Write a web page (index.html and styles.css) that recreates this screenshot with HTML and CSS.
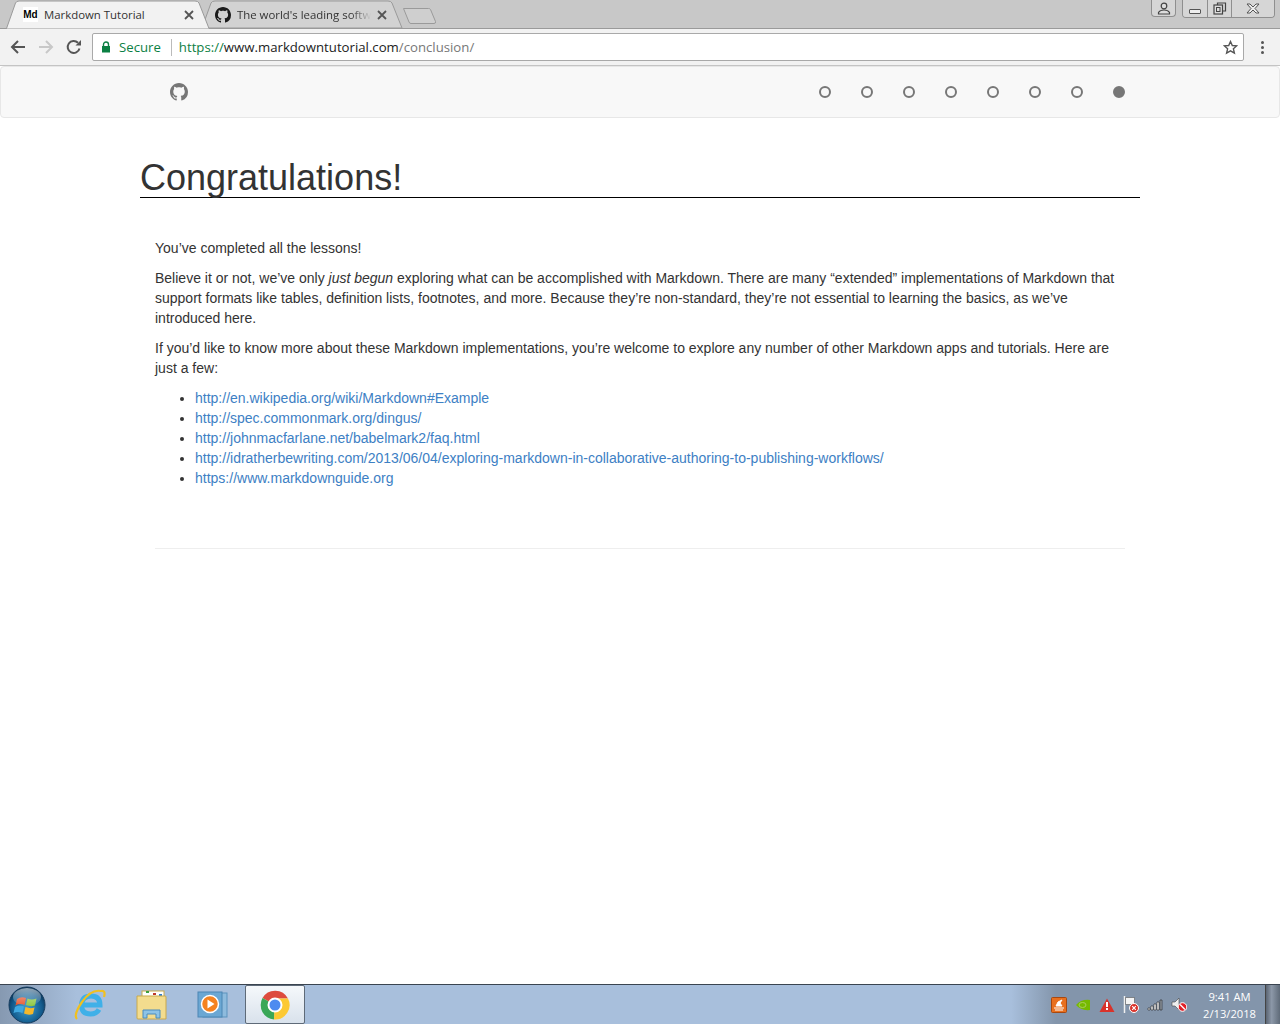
FILE: index.html
```html
<!DOCTYPE html>
<html lang="en">
<head>
<meta charset="utf-8">
<title>Markdown Tutorial</title>
<link rel="stylesheet" href="styles.css">
</head>
<body>
<div class="screen">
  <header class="browser">
    <div class="tabstrip">
      <div class="tabs">
        <div class="tab tab-active">
          <svg class="tab-shape" width="212" height="29" viewBox="0 0 212 29"><path d="M0 28.500h6.500L15.500 3Q16.500 1 19 1h176q3 0 4 2l10 25.500" fill="#f2f2f2" stroke="#9a9a9a"/></svg>
          <span class="favicon-md">Md</span>
          <span class="tab-title">Markdown Tutorial</span>
          <svg class="tab-close" width="10" height="10" viewBox="0 0 10 10"><path d="M1 1l8 8M9 1l-8 8" stroke="#555" stroke-width="1.800"/></svg>
        </div>
        <div class="tab tab-back">
          <svg class="tab-shape" width="200" height="29" viewBox="0 0 200 29"><path d="M-3 28L6 3Q7 1 10 1h173q3 0 4 2l10 25z" fill="#d2d2d2" stroke="#9a9a9a"/></svg>
          <svg class="fav-gh" width="16" height="16" viewBox="0 0 16 16"><path fill="#1b1b1b" d="M8 0C3.580 0 0 3.580 0 8c0 3.540 2.290 6.530 5.470 7.590.4.070.55-.17.55-.38 0-.19-.01-.82-.01-1.490-2.010.37-2.530-.49-2.690-.94-.09-.23-.48-.94-.82-1.130-.28-.15-.68-.52-.01-.53.630-.01 1.080.58 1.230.82.720 1.210 1.870.87 2.330.66.070-.52.280-.87.510-1.070-1.780-.2-3.640-.89-3.640-3.950 0-.87.310-1.590.820-2.150-.08-.2-.36-1.020.08-2.120 0 0 .67-.21 2.200.82.640-.18 1.320-.27 2-.27s1.360.09 2 .27c1.530-1.040 2.200-.82 2.200-.82.440 1.100.16 1.920.08 2.120.51.560.82 1.270.82 2.150 0 3.070-1.870 3.750-3.650 3.950.29.250.54.730.54 1.480 0 1.070-.01 1.930-.01 2.200 0 .21.150.46.550.38A8.010 8.010 0 0016 8c0-4.420-3.580-8-8-8z"/></svg>
          <span class="tab-title tab-title-fade">The world's leading software</span>
          <svg class="tab-close" width="10" height="10" viewBox="0 0 10 10"><path d="M1 1l8 8M9 1l-8 8" stroke="#555" stroke-width="1.800"/></svg>
        </div>
        <svg class="newtab" width="36" height="18" viewBox="0 0 36 18"><path d="M1.500 1.500h25q1.500 0 2 1l5 12q.5 2-1.500 2H9q-1.500 0-2-1.500z" fill="#cfcfcf" stroke="#9a9a9a"/></svg>
      </div>
      <div class="wincontrols">
        <div class="winbtn winbtn-user">
          <svg width="14" height="13" viewBox="0 0 14 13"><circle cx="7" cy="4" r="2.800" fill="#ddd" stroke="#444" stroke-width="1.200"/><path d="M1.500 12v-1.500Q3 8 7 8t5.500 2.500V12z" fill="#ddd" stroke="#444" stroke-width="1.200"/></svg>
        </div>
        <div class="wingroup">
          <div class="winbtn winbtn-min"><span class="min-glyph"></span></div>
          <div class="winbtn winbtn-max">
            <svg width="14" height="13" viewBox="0 0 14 13"><path d="M4.500 3V1h8v8h-3" fill="none" stroke="#444" stroke-width="1.200"/><rect x="1" y="3" width="8.500" height="9" fill="#ddd" stroke="#444" stroke-width="1.200"/><rect x="3.500" y="5.500" width="3.500" height="4" fill="none" stroke="#444"/></svg>
          </div>
          <div class="winbtn winbtn-close">
            <svg width="14" height="11" viewBox="0 0 14 11"><path d="M1 1h3l3 3 3-3h3L9 5.500l4 4.500h-3L7 7l-3 3H1l4-4.500z" fill="#eee" stroke="#555"/></svg>
          </div>
        </div>
      </div>
    </div>
    <div class="toolbar">
      <div class="navbtns">
        <svg width="16" height="14" viewBox="0 0 16 14"><path d="M15 7H2M8 1L2 7l6 6" fill="none" stroke="#555" stroke-width="2"/></svg>
        <svg width="16" height="14" viewBox="0 0 16 14"><path d="M1 7h13M8 1l6 6-6 6" fill="none" stroke="#c8c8c8" stroke-width="2"/></svg>
        <svg width="16" height="16" viewBox="0 0 16 16"><path d="M13.500 9.500A6 6 0 1 1 12 3.800" fill="none" stroke="#555" stroke-width="2"/><path d="M9.500 6.500H15V1z" fill="#555"/></svg>
      </div>
      <div class="omnibox">
        <svg class="lock" width="10" height="12" viewBox="0 0 10 12"><path d="M2.500 5V3.500a2.500 2.500 0 0 1 5 0V5" fill="none" stroke="#0b8043" stroke-width="1.400"/><rect x="1" y="5" width="8" height="6.500" fill="#0b8043"/></svg>
        <span class="secure">Secure</span>
        <span class="omni-sep"></span>
        <span class="url"><span class="url-scheme">https://</span><span class="url-host">www.markdowntutorial.com</span><span class="url-path">/conclusion/</span></span>
        <svg class="star" width="15" height="15" viewBox="0 0 15 15"><path d="M7.500 1.500l1.800 4 4.300.4-3.200 2.900 1 4.200-3.900-2.200-3.900 2.200 1-4.200L1.400 5.900l4.300-.4z" fill="none" stroke="#555" stroke-width="1.400"/></svg>
      </div>
      <div class="menu-dots"><i></i><i></i><i></i></div>
    </div>
  </header>

  <main class="page">
    <nav class="navbar">
      <a class="gh-link" href="#" aria-label="GitHub">
        <svg width="18" height="18" viewBox="0 0 16 16"><path fill="#777" d="M8 0C3.580 0 0 3.580 0 8c0 3.540 2.290 6.530 5.470 7.590.4.070.55-.17.55-.38 0-.19-.01-.82-.01-1.490-2.010.37-2.530-.49-2.690-.94-.09-.23-.48-.94-.82-1.130-.28-.15-.68-.52-.01-.53.630-.01 1.080.58 1.230.82.720 1.210 1.870.87 2.330.66.070-.52.280-.87.510-1.070-1.780-.2-3.640-.89-3.640-3.950 0-.87.310-1.590.820-2.150-.08-.2-.36-1.020.08-2.120 0 0 .67-.21 2.200.82.640-.18 1.320-.27 2-.27s1.360.09 2 .27c1.530-1.040 2.200-.82 2.200-.82.440 1.100.16 1.920.08 2.120.51.560.82 1.270.82 2.150 0 3.070-1.870 3.750-3.650 3.950.29.250.54.730.54 1.480 0 1.070-.01 1.930-.01 2.200 0 .21.150.46.550.38A8.010 8.010 0 0016 8c0-4.420-3.580-8-8-8z"/></svg>
      </a>
      <div class="dots">
        <span class="dot"></span><span class="dot"></span><span class="dot"></span><span class="dot"></span><span class="dot"></span><span class="dot"></span><span class="dot"></span><span class="dot dot-on"></span>
      </div>
    </nav>
    <div class="container">
      <h1 class="title">Congratulations!</h1>
      <div class="lesson">
        <p>You’ve completed all the lessons!</p>
        <p>Believe it or not, we’ve only <em>just begun</em> exploring what can be accomplished with Markdown. There are many “extended” implementations of Markdown that support formats like tables, definition lists, footnotes, and more. Because they’re non-standard, they’re not essential to learning the basics, as we’ve introduced here.</p>
        <p>If you’d like to know more about these Markdown implementations, you’re welcome to explore any number of other Markdown apps and tutorials. Here are just a few:</p>
        <ul class="links">
          <li><a href="#">http://en.wikipedia.org/wiki/Markdown#Example</a></li>
          <li><a href="#">http://spec.commonmark.org/dingus/</a></li>
          <li><a href="#">http://johnmacfarlane.net/babelmark2/faq.html</a></li>
          <li><a href="#">http://idratherbewriting.com/2013/06/04/exploring-markdown-in-collaborative-authoring-to-publishing-workflows/</a></li>
          <li><a href="#">https://www.markdownguide.org</a></li>
        </ul>
        <hr class="rule">
      </div>
    </div>
  </main>

  <footer class="taskbar">
    <div class="task-start">
      <svg width="38" height="38" viewBox="0 0 38 38">
        <defs>
          <radialGradient id="orb" cx="50%" cy="60%" r="60%"><stop offset="0" stop-color="#3f9fd0"/><stop offset=".7" stop-color="#125a8c"/><stop offset="1" stop-color="#0a2f50"/></radialGradient>
          <linearGradient id="gloss" x1="0" y1="0" x2="0" y2="1"><stop offset="0" stop-color="#fff" stop-opacity=".55"/><stop offset="1" stop-color="#fff" stop-opacity=".05"/></linearGradient>
        </defs>
        <circle cx="19" cy="19" r="18" fill="url(#orb)" stroke="#163c5e"/>
        <path d="M9 13q4-3 9-1l-1.500 7q-4.500-2-9 .5z" fill="#e8552c"/>
        <path d="M19.500 12.500q4 2 9 0l-1.500 7q-4.500 1.500-9-.5z" fill="#8cc63f"/>
        <path d="M7 21q4.500-2.500 9-.5L14.500 27q-4.500-2-9 0z" fill="#3fa8e0"/>
        <path d="M17.500 21q4.500 2 9 .5L25 28q-4.500 1.500-9-.5z" fill="#f6b82a"/>
        <ellipse cx="19" cy="11" rx="14" ry="9" fill="url(#gloss)"/>
      </svg>
    </div>
    <div class="task-item">
      <svg width="34" height="34" viewBox="0 0 34 34"><path d="M8.500 17h18.500q0-9-9-9t-9.500 9q0 9 9 9 6 0 8.500-4.500" fill="none" stroke="#3fb0e8" stroke-width="5"/><path d="M4 31Q0 27 9 14T28 3q5-1 3 6" fill="none" stroke="#f0c020" stroke-width="2.200"/></svg>
    </div>
    <div class="task-item">
      <svg width="34" height="30" viewBox="0 0 34 30"><rect x="7" y="1" width="22" height="10" fill="#fff" stroke="#c9a94c"/><rect x="11" y="1" width="3" height="2" fill="#3ca03c"/><rect x="18" y="3" width="3" height="2" fill="#c0392b"/><rect x="24" y="4" width="3" height="2" fill="#2d7fd0"/><path d="M2 6h28a1 1 0 0 1 1 1v22H3a1 1 0 0 1-1-1z" fill="#f3dc8e" stroke="#c9a94c"/><path d="M8 28v-8h17v8h-4v-4h-9v4z" fill="#8dc3e6" stroke="#4b8cbd"/></svg>
    </div>
    <div class="task-item">
      <svg width="34" height="30" viewBox="0 0 34 30"><rect x="6" y="3" width="24" height="24" fill="#8ebbdd" stroke="#5d93bd"/><rect x="1" y="2" width="24" height="25" fill="#6ba7d3" stroke="#4d86b3"/><circle cx="13" cy="14" r="8.500" fill="#f5821f" stroke="#fff" stroke-width="1.500"/><path d="M10.500 9.500l7 4.500-7 4.500z" fill="#fff"/></svg>
    </div>
    <div class="task-item task-item-on">
      <svg width="30" height="30" viewBox="0 0 30 30"><path d="M15 15L2.500 8A14.500 14.500 0 0 1 28 8.500H15z" fill="#dd4b3e"/><path d="M15 15L2.500 8A14.500 14.500 0 0 0 14 29.500z" fill="#3aa757"/><path d="M15 8.500h13A14.500 14.500 0 0 1 14 29.500z" fill="#fcc934"/><circle cx="15" cy="15" r="6.500" fill="#4d8bf0" stroke="#fff" stroke-width="2"/></svg>
    </div>
    <div class="tray">
      <div class="tray-icons">
        <svg width="16" height="16" viewBox="0 0 16 16"><rect x=".5" y=".5" width="15" height="15" rx="1" fill="#e8701f" stroke="#a8480f"/><path d="M3 11h10M4 13h8M5 9h6L9 6l2-3-4 2z" fill="#fff" stroke="#fff"/></svg>
        <svg width="16" height="12" viewBox="0 0 16 12"><path d="M1 6q5-6 14-5v10q-9 1-14-5z" fill="#76b900"/><ellipse cx="7.500" cy="6" rx="3.500" ry="2.500" fill="none" stroke="#a9d05a"/></svg>
        <svg width="16" height="14" viewBox="0 0 16 14"><path d="M8 .5L15.500 14H.5z" fill="#d9322a"/><path d="M7 4h2v5H7zM7 10h2v2H7z" fill="#fff"/></svg>
        <svg width="16" height="17" viewBox="0 0 16 17"><path d="M1.500 0v17" stroke="#f0f0f0" stroke-width="1.500"/><path d="M2.500 1.500h9v7h-9z" fill="#f4f4f4" stroke="#555" stroke-width=".6"/><circle cx="11" cy="12" r="4.500" fill="#d9322a" stroke="#fff"/><path d="M9.200 10.200l3.600 3.600M12.800 10.200l-3.600 3.600" stroke="#fff" stroke-width="1.200"/></svg>
        <svg width="16" height="12" viewBox="0 0 16 12"><path d="M1 9h2v2H1zM4 7h2v4H4zM7 5h2v6H7zM10 3h2v8h-2z" fill="#fff" stroke="#222" stroke-width=".6"/><path d="M13 1h2v10h-2z" fill="#9aa3ad" stroke="#222" stroke-width=".6"/></svg>
        <svg width="16" height="15" viewBox="0 0 16 15"><path d="M1 5h3l4-4v12L4 9H1z" fill="#eee" stroke="#444" stroke-width=".6"/><circle cx="11.500" cy="10" r="4.300" fill="#e01f26" stroke="#fff"/><path d="M9 7.500l5 5" stroke="#fff" stroke-width="1.400"/></svg>
      </div>
      <div class="clock"><span>9:41 AM</span><span>2/13/2018</span></div>
      <div class="show-desktop"></div>
    </div>
  </footer>
</div>
</body>
</html>
```

FILE: styles.css
```css
* { box-sizing: border-box; }
html, body { margin: 0; padding: 0; }
body { font-family: "Liberation Sans", Arial, sans-serif; color: #333; background: #fff; }
.screen { width: 1280px; height: 1024px; display: flex; flex-direction: column; overflow: hidden; }

.browser { flex: none; height: 66px; display: flex; flex-direction: column; }
.tabstrip { height: 29px; background: #c8c8c8; border-bottom: 1px solid #9a9a9a; display: flex; justify-content: space-between; align-items: flex-start; }
.tabs { display: flex; height: 29px; align-items: flex-start; }
.tab { position: relative; height: 29px; display: flex; align-items: center; font-family: "Open Sans", sans-serif; font-size: 11.400px; color: #333; }
.tab-shape { position: absolute; left: 0; top: 0; overflow: visible; }
.tab-active { width: 206px; padding: 0 0 0 23px; z-index: 2; }
.tab-back { width: 196px; margin-left: -1px; padding-left: 10px; z-index: 1; }
.tab > *:not(.tab-shape) { position: relative; }
.favicon-md { width: 15px; height: 15px; background: #fff; color: #000; font: bold 10px/15px "Liberation Sans", sans-serif; text-align: center; margin-right: 6px; }
.tab-title { width: 135px; white-space: nowrap; overflow: hidden; }
.tab-title-fade { width: 134px; margin-left: 6px; -webkit-mask-image: linear-gradient(90deg, #000 85%, transparent); mask-image: linear-gradient(90deg, #000 85%, transparent); }
.tab-active .tab-close { margin-left: 5px; }
.tab-back .tab-close { margin-left: 6px; }
.newtab { margin: 7px 0 0 1px; }

.wincontrols { display: flex; gap: 6px; padding-right: 5px; }
.winbtn { height: 17px; display: flex; align-items: center; justify-content: center; background: #d6d6d6; }
.winbtn-user { width: 25px; border: 1px solid #8f8f8f; border-top: 0; border-radius: 0 0 4px 4px; }
.wingroup { display: flex; border: 1px solid #8f8f8f; border-top: 0; border-radius: 0 0 4px 4px; overflow: hidden; }
.winbtn-min { width: 25px; border-right: 1px solid #8f8f8f; }
.winbtn-max { width: 24px; border-right: 1px solid #8f8f8f; }
.winbtn-close { width: 42px; }
.min-glyph { width: 12px; height: 5px; margin-top: 5px; border: 1px solid #555; background: #eee; border-radius: 1px; }

.toolbar { height: 37px; background: #f2f2f2; border-bottom: 1px solid #c4c4c4; display: flex; align-items: center; padding: 0 0 0 10px; }
.navbtns { display: flex; align-items: center; gap: 12px; width: 82px; }
.omnibox { width: 1152px; height: 28px; background: #fff; border: 1px solid #a9a9a9; border-radius: 2px; display: flex; align-items: center; padding: 0 5px 0 8px; font-family: "Open Sans", sans-serif; font-size: 13.200px; }
.lock { flex: none; }
.secure { color: #0b8043; margin-left: 8px; }
.omni-sep { width: 1px; height: 17px; background: #bbb; margin: 0 7px 0 10px; }
.url { flex: 1; white-space: nowrap; }
.url-scheme { color: #0b8043; }
.url-host { color: #222; }
.url-path { color: #777; }
.star { flex: none; }
.menu-dots { width: 36px; display: flex; flex-direction: column; align-items: center; gap: 2px; }
.menu-dots i { width: 3px; height: 3px; border-radius: 50%; background: #555; }

.page { flex: 1; min-height: 0; background: #fff; }
.navbar { height: 52px; background: #f8f8f8; border: 1px solid #e7e7e7; border-radius: 4px; display: flex; align-items: center; justify-content: space-between; padding: 0 154px 0 169px; }
.gh-link { display: flex; }
.dots { display: flex; gap: 30px; }
.dot { width: 12px; height: 12px; border-radius: 50%; border: 2px solid #777; }
.dot-on { background: #777; }

.container { width: 1000px; margin: 0 auto; }
.title { margin: 20px 0 0; height: 60px; padding-top: 20px; font-size: 36px; line-height: 39px; font-weight: 500; color: #333; border-bottom: 1px solid #000; }
.lesson { padding: 40px 15px 0; font-size: 14px; line-height: 20px; }
.lesson p { margin: 0 0 10px; }
.links { margin: 0 0 10px; padding-left: 40px; }
.links a { color: #3d80c4; text-decoration: none; }
.rule { border: 0; border-top: 1px solid #eee; margin: 60px 0 0; }

.taskbar { flex: none; height: 40px; border-top: 1px solid #3a4450; background: linear-gradient(90deg, #8699b1 0, #a8bfdc 6%, #a8bfdc 79%, #8395ab 82.500%, #8395ab 100%); display: flex; align-items: center; }
.task-start { width: 54px; display: flex; justify-content: center; }
.task-item { width: 62px; height: 39px; display: flex; align-items: center; justify-content: center; }
.task-start + .task-item { margin-left: 5px; }
.task-item-on { width: 60px; background: linear-gradient(#f5f8fb, #d9e2ec); border: 1px solid #5e6a78; border-radius: 2px; }
.tray { margin-left: auto; height: 39px; display: flex; align-items: center; }
.tray-icons { display: flex; align-items: center; gap: 8px; }
.clock { width: 74px; margin-left: 3px; padding-left: 5px; display: flex; flex-direction: column; align-items: center; font-family: "Open Sans", sans-serif; font-size: 11.200px; line-height: 17px; color: #fff; }
.show-desktop { width: 15px; height: 39px; margin-left: 1px; background: linear-gradient(90deg, #5a6472, #8c98a8 40%, #5f6b79); border-left: 1px solid #444; }
```
